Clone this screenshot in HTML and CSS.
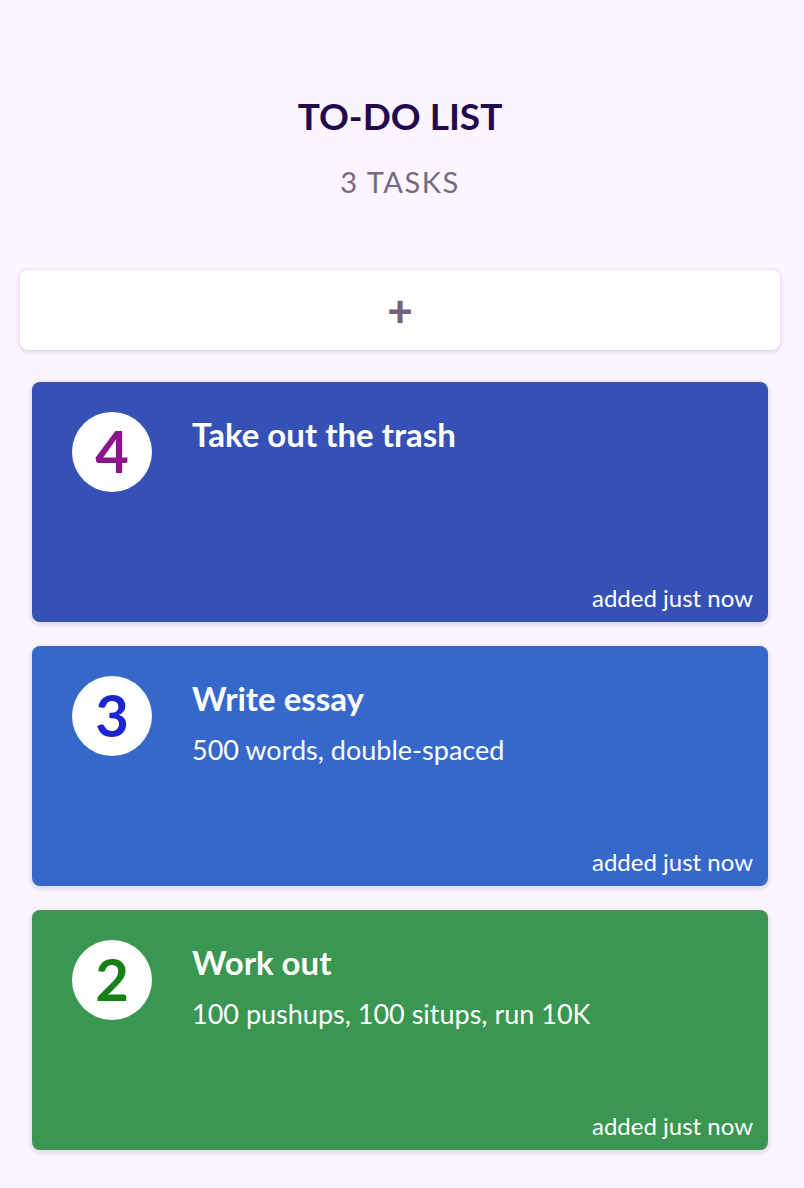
FILE: index.html
```html
<!DOCTYPE html>
<html lang="en">
<head>
<meta charset="utf-8">
<title>To-do list</title>
<link rel="stylesheet" href="styles.css">
</head>
<body>
<main class="app">
  <header class="header">
    <h1 class="title">TO-DO LIST</h1>
    <p class="count">3 TASKS</p>
  </header>
  <button class="add" type="button">+</button>
  <ul class="list">
    <li class="card card-indigo">
      <div class="row">
        <span class="badge badge-purple">4</span>
        <div class="text">
          <h2 class="task">Take out the trash</h2>
        </div>
      </div>
      <p class="meta">added just now</p>
    </li>
    <li class="card card-blue">
      <div class="row">
        <span class="badge badge-blue">3</span>
        <div class="text">
          <h2 class="task">Write essay</h2>
          <p class="desc">500 words, double-spaced</p>
        </div>
      </div>
      <p class="meta">added just now</p>
    </li>
    <li class="card card-green">
      <div class="row">
        <span class="badge badge-green">2</span>
        <div class="text">
          <h2 class="task">Work out</h2>
          <p class="desc">100 pushups, 100 situps, run 10K</p>
        </div>
      </div>
      <p class="meta">added just now</p>
    </li>
  </ul>
</main>
</body>
</html>
```

FILE: styles.css
```css
* { box-sizing: border-box; }
html, body {
  margin: 0;
  padding: 0;
  background: #fcf4fe;
  font-family: Lato, "Liberation Sans", sans-serif;
}
.app {
  width: 760px;
  margin-left: 20px;
  padding: 90px 0 30px;
}
.header {
  text-align: center;
}
.title {
  margin: 0;
  font-size: 37px;
  line-height: 52px;
  font-weight: 700;
  color: #24094e;
}
.count {
  margin: 22px 0 0;
  font-size: 29px;
  line-height: 36px;
  letter-spacing: 1.5px;
  color: #756b80;
}
.add {
  display: block;
  width: 100%;
  height: 80px;
  margin-top: 70px;
  border: 0;
  border-radius: 8px;
  background: #fff;
  box-shadow: 0 1px 5px rgba(60, 30, 80, 0.22);
  font-family: inherit;
  font-size: 44px;
  font-weight: 900;
  color: #6e6480;
  padding: 0;
}
.list {
  list-style: none;
  margin: 32px 0 0;
  padding: 0 12px;
  display: flex;
  flex-direction: column;
  gap: 24px;
}
.card {
  height: 240px;
  border-radius: 8px;
  padding: 30px 15px 10px 40px;
  display: flex;
  flex-direction: column;
  color: #fff;
  box-shadow: 0 2px 6px rgba(60, 30, 80, 0.18);
}
.card-indigo { background: #3651b5; }
.card-blue { background: #3668cb; }
.card-green { background: #3a9650; }
.row {
  display: flex;
  gap: 40px;
}
.badge {
  flex: none;
  width: 80px;
  height: 80px;
  border-radius: 50%;
  background: #fff;
  display: flex;
  align-items: center;
  justify-content: center;
  font-size: 58px;
  font-weight: 700;
  line-height: 1;
  padding-bottom: 2px;
}
.badge-purple { color: #8b158b; }
.badge-blue { color: #1c27d2; }
.badge-green { color: #178017; }
.task {
  margin: 0;
  font-size: 33px;
  line-height: 44px;
  font-weight: 700;
}
.desc {
  margin: 12px 0 0;
  font-size: 27px;
  line-height: 36px;
}
.meta {
  margin: auto 0 0;
  text-align: right;
  font-size: 24px;
  line-height: 28px;
}
```
